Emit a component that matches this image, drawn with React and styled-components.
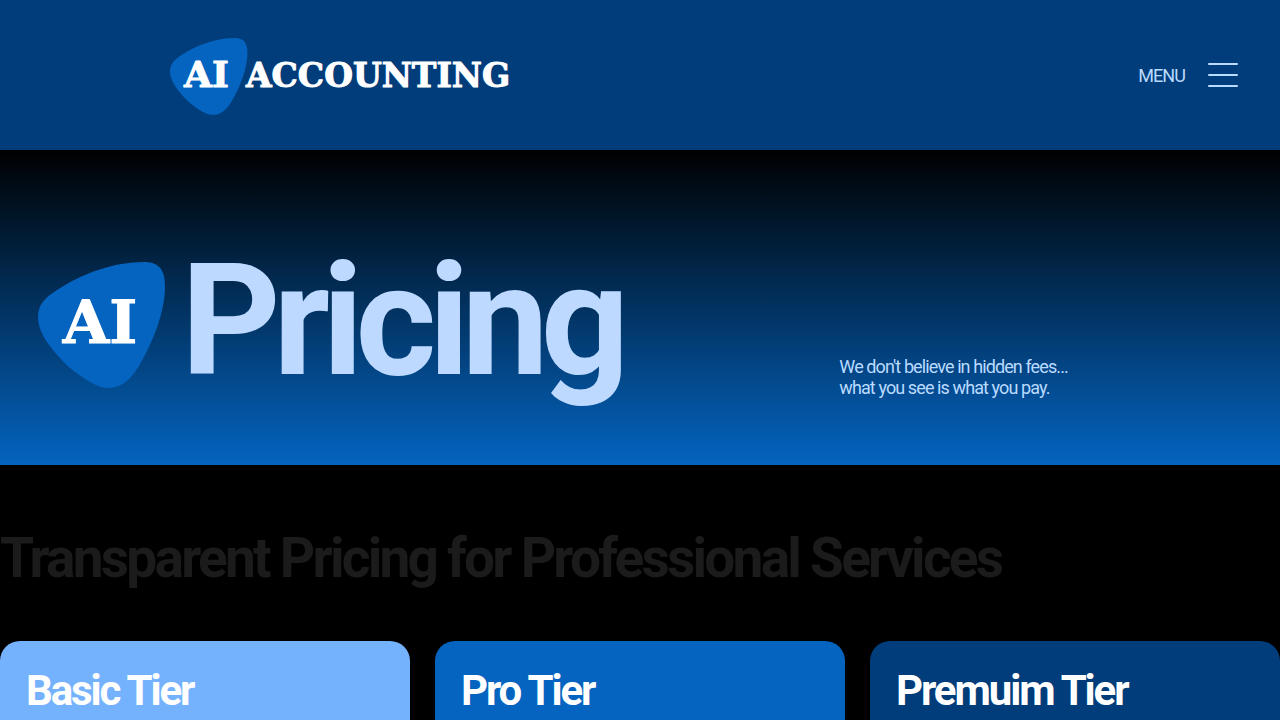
import React from "react";
import styled, { createGlobalStyle } from "styled-components";

const GlobalStyle = createGlobalStyle`
  * {
    box-sizing: border-box;
    letter-spacing: -0.05em;
  }
  body {
    margin: 0;
    background: #000;
    color: #1b1b1b;
    font-family: Roboto, "Liberation Sans", sans-serif;
    font-size: 18px;
    line-height: 21px;
    overflow-x: hidden;
  }
  h1, h2, h3, p {
    margin: 0;
  }
`;

const HeaderStyle = styled.header`
  display: flex;
  align-items: center;
  justify-content: space-between;
  min-height: 150px;
  padding: 0 42px 0 170px;
  background: #003d7a;
`;

const LogoLinkStyle = styled.a`
  display: block;
  line-height: 0;
`;

const LogoStyle = styled.svg`
  display: block;
  flex: none;
  overflow: visible;
  font-family: "DejaVu Serif", serif;
  font-weight: 700;

  text {
    fill: #fff;
    stroke: #fff;
    stroke-width: 1px;
    stroke-linejoin: round;
    letter-spacing: 0;
  }
`;

const MenuButtonStyle = styled.button`
  display: flex;
  align-items: center;
  gap: 23px;
  padding: 0;
  border: none;
  background: none;
  color: #badbff;
  font: inherit;
  cursor: pointer;
`;

const HeroStyle = styled.section`
  display: grid;
  grid-template-columns: 2fr 1fr;
  align-items: end;
  min-height: 315px;
  padding: 0 40px 67px 38px;
  background: linear-gradient(#000, #0464c0);
  color: #badbff;
`;

const HeroTitleStyle = styled.div`
  display: flex;
  align-items: center;
  gap: 16px;
`;

const TitleStyle = styled.h1`
  font-size: 155px;
  line-height: 154px;
  font-weight: 700;
  color: #bdd9ff;
`;

const HeadingStyle = styled.h2`
  padding: 60px 0 50px;
  font-size: 55px;
  line-height: 66px;
  font-weight: 700;
`;

const TierGridStyle = styled.div`
  display: grid;
  grid-template-columns: repeat(3, 1fr);
  gap: 25px;
`;

const TierStyle = styled.article`
  min-height: 400px;
  padding: 26px;
  border-radius: 20px;
  background: ${({ $color }) => $color};
`;

const TierNameStyle = styled.h3`
  color: #fff;
  font-size: 42px;
  line-height: 48px;
  font-weight: 700;
`;

const tiers = [
  { name: "Basic Tier", color: "#75b2fd" },
  { name: "Pro Tier", color: "#0464c0" },
  { name: "Premuim Tier", color: "#003d7a" },
];

const badgePath =
  "M0 55C0 42 8 35 19 28C45 11 76 0 106 0C121 0 127 8 127 24C127 50 115 80 101 104C91 120 82 126 70 126C58 126 44 115 32 106C15 90 0 72 0 55Z";

const Logo = () => (
  <LogoStyle width="337" height="79" viewBox="0 -2 337 79">
    <path d={badgePath} transform="scale(0.61)" fill="#0464c0" />
    <text x="14" y="49" fontSize="36">AI</text>
    <text x="76" y="49" fontSize="33">ACCOUNTING</text>
  </LogoStyle>
);

const Badge = () => (
  <LogoStyle width="127" height="134" viewBox="0 -8 127 134" aria-hidden="true">
    <path d={badgePath} fill="#0464c0" />
    <text x="62" y="81" fontSize="60" textAnchor="middle">
      AI
    </text>
  </LogoStyle>
);

const App = () => {
  return (
    <>
      <GlobalStyle />
      <HeaderStyle>
        <LogoLinkStyle href="#home">
          <Logo />
        </LogoLinkStyle>
        <MenuButtonStyle type="button">
          MENU
          <svg width="30" height="24" viewBox="0 0 30 24" aria-hidden="true">
            <path
              d="M1 1H29M1 12H29M1 23H29"
              stroke="#badbff"
              strokeWidth="2"
              strokeLinecap="round"
            />
          </svg>
        </MenuButtonStyle>
      </HeaderStyle>
      <main>
        <HeroStyle>
          <HeroTitleStyle>
            <Badge />
            <TitleStyle>Pricing</TitleStyle>
          </HeroTitleStyle>
          <p>
            We don't believe in hidden fees...
            <br />
            what you see is what you pay.
          </p>
        </HeroStyle>
        <HeadingStyle>Transparent Pricing for Professional Services</HeadingStyle>
        <TierGridStyle>
          {tiers.map((tier) => (
            <TierStyle key={tier.name} $color={tier.color}>
              <TierNameStyle>{tier.name}</TierNameStyle>
            </TierStyle>
          ))}
        </TierGridStyle>
      </main>
    </>
  );
};

export default App;
